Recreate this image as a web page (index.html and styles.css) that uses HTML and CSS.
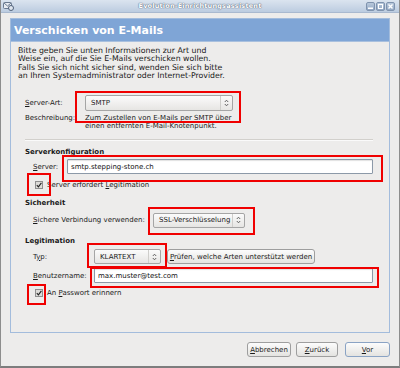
FILE: index.html
```html
<!DOCTYPE html>
<html lang="de">
<head>
  <meta charset="UTF-8" />
  <title>Evolution-Einrichtungsassistent</title>
  <link rel="stylesheet" href="styles.css">
</head>
<body>
  <div class="window">
    <div class="titlebar">
      <svg class="app-icon" width="11" height="10" viewBox="0 0 11 10">
        <rect x="0.5" y="1.5" width="8" height="6" rx="1" fill="#e8ecf2" stroke="#6a7a90"/>
        <path d="M1 2 L4.5 5 L8 2" fill="none" stroke="#6a7a90"/>
        <circle cx="8" cy="7" r="2.5" fill="#dfe6ef" stroke="#50607a"/>
      </svg>
      <span class="title">Evolution-Einrichtungsassistent</span>
      <div class="wm-buttons">
        <span class="wm-btn"><svg width="7" height="7" viewBox="0 0 7 7"><rect x="1" y="4.5" width="5" height="1.5" fill="#fff"/></svg></span>
        <span class="wm-btn"><svg width="7" height="7" viewBox="0 0 7 7"><rect x="1.5" y="1.5" width="4" height="4" fill="none" stroke="#fff"/></svg></span>
        <span class="wm-btn"><svg width="7" height="7" viewBox="0 0 7 7"><path d="M1.5 1.5 L5.5 5.5 M5.5 1.5 L1.5 5.5" stroke="#fff" stroke-width="1.4"/></svg></span>
      </div>
    </div>

    <div class="panel">
      <div class="panel-header">Verschicken von E-Mails</div>
      <div class="panel-body">
        <p class="intro">Bitte geben Sie unten Informationen zur Art und<br>
          Weise ein, auf die Sie E-Mails verschicken wollen.<br>
          Falls Sie sich nicht sicher sind, wenden Sie sich bitte<br>
          an Ihren Systemadministrator oder Internet-Provider.</p>

        <div class="form">
          <div class="row row-type">
            <span class="label w-type"><u>S</u>erver-Art:</span>
            <div class="combo combo-smtp"><span>SMTP</span><span class="arrow"><svg width="5" height="8" viewBox="0 0 5 8"><path d="M0.8 3 L2.5 1.2 L4.2 3 M0.8 5 L2.5 6.8 L4.2 5" fill="none" stroke="#555" stroke-width="0.9"/></svg></span></div>
          </div>
          <div class="row row-desc">
            <span class="label w-type">Beschreibung:</span>
            <span class="desc">Zum Zustellen von E-Mails per SMTP über<br>einen entfernten E-Mail-Knotenpunkt.</span>
          </div>

          <div class="separator"></div>

          <div class="heading h-server">Serverkonfiguration</div>
          <div class="row sub row-server">
            <span class="label w-server"><u>S</u>erver:</span>
            <div class="entry entry-server">smtp.stepping-stone.ch</div>
          </div>
          <div class="row sub check-row check-1">
            <span class="checkbox"><svg width="6" height="6" viewBox="0 0 6 6"><path d="M0.8 3.2 L2.4 4.8 L5.4 0.8" fill="none" stroke="#222" stroke-width="1.1"/></svg></span>
            <span>Server erfordert <u>L</u>egitimation</span>
          </div>

          <div class="heading h-security">Sicherheit</div>
          <div class="row sub row-ssl">
            <span class="label w-ssl"><u>S</u>ichere Verbindung verwenden:</span>
            <div class="combo combo-ssl"><span>SSL-Verschlüsselung</span><span class="arrow"><svg width="5" height="8" viewBox="0 0 5 8"><path d="M0.8 3 L2.5 1.2 L4.2 3 M0.8 5 L2.5 6.8 L4.2 5" fill="none" stroke="#555" stroke-width="0.9"/></svg></span></div>
          </div>

          <div class="heading h-auth">Legitimation</div>
          <div class="row sub row-auth">
            <span class="label w-auth">T<u>y</u>p:</span>
            <div class="combo combo-auth"><span>KLARTEXT</span><span class="arrow"><svg width="5" height="8" viewBox="0 0 5 8"><path d="M0.8 3 L2.5 1.2 L4.2 3 M0.8 5 L2.5 6.8 L4.2 5" fill="none" stroke="#555" stroke-width="0.9"/></svg></span></div>
            <button class="btn btn-check"><u>P</u>rüfen, welche Arten unterstützt werden</button>
          </div>
          <div class="row sub row-user">
            <span class="label w-auth"><u>B</u>enutzername:</span>
            <div class="entry entry-user">max.muster@test.com</div>
          </div>
          <div class="row sub check-row check-2">
            <span class="checkbox"><svg width="6" height="6" viewBox="0 0 6 6"><path d="M0.8 3.2 L2.4 4.8 L5.4 0.8" fill="none" stroke="#222" stroke-width="1.1"/></svg></span>
            <span>An <u>P</u>asswort erinnern</span>
          </div>
        </div>
      </div>
    </div>

    <div class="footer">
      <button class="btn btn-cancel"><u>A</u>bbrechen</button>
      <button class="btn btn-back"><u>Z</u>urück</button>
      <button class="btn btn-next"><u>V</u>or</button>
    </div>

    <!-- red highlight boxes drawn over the dialog -->
    <div class="mark m1"></div>
    <div class="mark m2"></div>
    <div class="mark m3"></div>
    <div class="mark m4"></div>
    <div class="mark m5"></div>
    <div class="mark m6"></div>
    <div class="mark m7"></div>
  </div>
</body>
</html>
```

FILE: styles.css
```css
/* Reset */
* {
  box-sizing: border-box;
}

body, html {
  margin: 0;
  width: 400px;
  height: 368px;
  overflow: hidden;
  font-family: "DejaVu Sans", sans-serif;
  font-size: 7px;
  color: #1a1a1a;
  background: #edeceb;
}

u {
  text-decoration: underline;
  text-underline-offset: 1px;
}

/* Window frame */
.window {
  position: relative;
  width: 400px;
  height: 368px;
  background: #edeceb;
  border-left: 1px solid #8d8d8d;
  border-right: 1px solid #8d8d8d;
  border-bottom: 2px solid #7d7d7d;
}

.titlebar {
  height: 13px;
  display: flex;
  align-items: center;
  position: relative;
  background: linear-gradient(#dbe4ef, #bccce0);
  border-bottom: 1px solid #a9b9cf;
}

.app-icon {
  margin-left: 2px;
}

.title {
  position: absolute;
  left: 0;
  right: 0;
  text-align: center;
  font-weight: bold;
  font-size: 6.5px;
  letter-spacing: 0.2px;
  color: #fff;
  text-shadow: 0 0 1px #4a5b74, 0 0 1px #4a5b74;
}

.wm-buttons {
  margin-left: auto;
  margin-right: 4px;
  display: flex;
  gap: 1px;
}

.wm-btn {
  width: 9px;
  height: 9px;
  border: 1px solid #7f93ae;
  border-radius: 2px;
  background: linear-gradient(#b8c8dc, #93a8c3);
  display: flex;
  align-items: center;
  justify-content: center;
}

/* Page panel */
.panel {
  margin: 5px 9px 0 9px;
  height: 315px;
  border: 1px solid #a3bcdc;
  background: #edeceb;
}

.panel-header {
  height: 23px;
  padding: 5px 0 0 3px;
  background: #7fa5d6;
  color: #fff;
  font-weight: bold;
  font-size: 11px;
  border-bottom: 1px solid #a9c0de;
}

.panel-body {
  padding: 5px 16px 0 7px;
}

.intro {
  margin: 0;
  font-size: 7.8px;
  line-height: 8.4px;
}

.form {
  margin-left: 7px;
}

.row {
  display: flex;
  align-items: center;
}

.sub {
  margin-left: 8px;
}

.label {
  flex: none;
}

.w-type { width: 60px; }
.w-server { width: 34px; }
.w-ssl { width: 120px; }
.w-auth { width: 61px; }

.row-type {
  margin-top: 14px;
  height: 16px;
}

.row-desc {
  margin-top: 3px;
  align-items: flex-start;
  line-height: 8.6px;
}

.desc {
  color: #222;
}

.separator {
  margin-top: 8px;
  height: 2px;
  border-top: 1px solid #d2d0cc;
  border-bottom: 1px solid #fafafa;
}

.heading {
  font-weight: bold;
  line-height: 8.4px;
}

.h-server { margin-top: 7px; }
.h-security { margin-top: 10px; }
.h-auth { margin-top: 9px; }

/* Combo boxes */
.combo {
  display: flex;
  align-items: center;
  justify-content: space-between;
  height: 16px;
  padding-left: 5px;
  border: 1px solid #a5a5a5;
  border-radius: 2px;
  background: linear-gradient(#fbfbfb, #e6e5e3);
}

.combo .arrow {
  width: 12px;
  height: 100%;
  display: flex;
  align-items: center;
  justify-content: center;
  border-left: 1px solid #cfcecb;
}

.combo-smtp { width: 148px; }
.combo-ssl { width: 92px; height: 15px; }
.combo-auth { width: 67px; height: 15px; }

/* Text entries */
.entry {
  height: 15px;
  flex: 1;
  padding: 3px 4px 0 3px;
  background: #fff;
  border: 1px solid #8c99a8;
  border-radius: 1px;
  box-shadow: inset 0 1px 1px rgba(0,0,0,0.12);
  color: #111;
}

.row-server {
  margin-top: 3px;
  height: 15px;
}

.check-row {
  gap: 4px;
  height: 8px;
}

.check-1 { margin-top: 7px; }
.check-2 { margin-top: 6px; }

.checkbox {
  width: 8px;
  height: 8px;
  margin-left: 2px;
  border: 1px solid #8f8f8f;
  background: #dcdbd8;
  display: flex;
  align-items: center;
  justify-content: center;
}

.row-ssl {
  margin-top: 5px;
  height: 15px;
}

.row-auth {
  margin-top: 4px;
  height: 15px;
}

.row-user {
  margin-top: 4px;
  height: 15px;
}

/* Buttons */
.btn {
  font-family: "DejaVu Sans", sans-serif;
  font-size: 7px;
  color: #1a1a1a;
  height: 15px;
  padding: 0;
  white-space: nowrap;
  border: 1px solid #9e9e9e;
  border-radius: 3px;
  background: linear-gradient(#fcfcfc, #e4e3e0);
}

.btn-check {
  margin-left: 6px;
  width: 148px;
}

.footer {
  display: flex;
  justify-content: flex-end;
  gap: 5px;
  padding: 9px 9px 0 0;
}

.btn-cancel { width: 44px; }
.btn-back { width: 42px; }
.btn-next { width: 45px; margin-left: 2px; border-color: #8aa3c4; }

/* Red annotation boxes */
.mark {
  position: absolute;
  border: 2px solid #f00000;
}

.m1 { left: 74px; top: 91px; width: 166px; height: 32px; }
.m2 { left: 61px; top: 155px; width: 321px; height: 27px; }
.m3 { left: 26px; top: 173px; width: 24px; height: 23px; }
.m4 { left: 147px; top: 207px; width: 107px; height: 28px; }
.m5 { left: 86px; top: 243px; width: 80px; height: 25px; }
.m6 { left: 89px; top: 267px; width: 289px; height: 21px; }
.m7 { left: 26px; top: 284px; width: 19px; height: 21px; }
```
